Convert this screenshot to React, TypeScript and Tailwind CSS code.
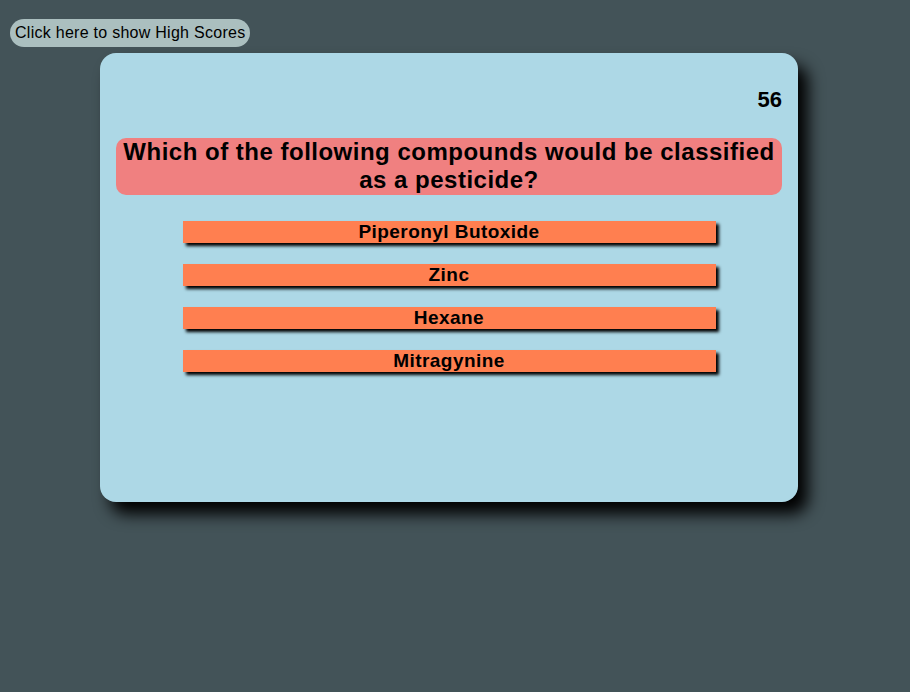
const answers = ["Piperonyl Butoxide", "Zinc", "Hexane", "Mitragynine"];

export default function App() {
  return (
    <div className="min-h-[692px] bg-[#435358] pt-[19px] font-['Liberation_Sans',Arial,sans-serif] text-black">
      <button className="ml-[10px] block h-[28px] rounded-[14px] bg-[#abbfbf] px-[5px] text-[16px] leading-[28px] tracking-[0.27px]">
        Click here to show High Scores
      </button>

      <div className="ml-[100px] mt-[6px] h-[449px] w-[698px] rounded-[16px] bg-[#add8e6] px-[16px] pt-[33px] shadow-[10px_12px_16px_#000]">
        <div className="text-right text-[22px] font-bold leading-[27px]">56</div>

        <div className="mt-[25px] rounded-[10px] bg-[#f08080] pb-[2px] text-center text-[24px] font-bold leading-[27.5px] tracking-[0.5px]">
          Which of the following compounds would be classified as a pesticide?
        </div>

        <div className="mt-[26px] flex flex-col items-center gap-[21px]">
          {answers.map((a) => (
            <div
              key={a}
              className="h-[22px] w-[533px] bg-[#ff7f50] text-center text-[19px] font-bold leading-[22px] tracking-[0.45px] shadow-[3px_3px_3px_#000]"
            >
              {a}
            </div>
          ))}
        </div>
      </div>
    </div>
  );
}
